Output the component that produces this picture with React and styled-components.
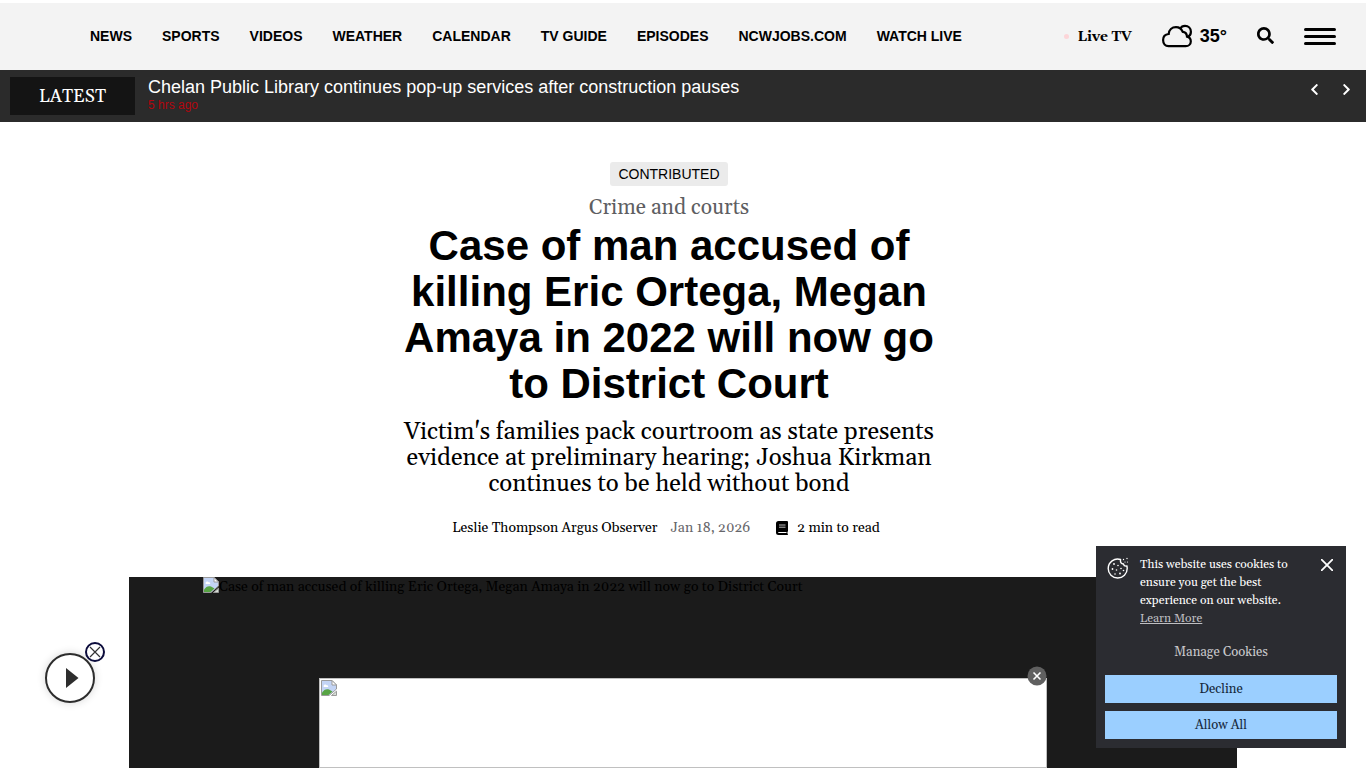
import React from "react";
import styled, { createGlobalStyle, ThemeProvider } from "styled-components";
import { FaSearch, FaChevronLeft, FaChevronRight } from "react-icons/fa";

const theme = {
  sans: '"Liberation Sans", Arial, sans-serif',
  serif: 'Georgia, Gelasio, "Liberation Serif", serif',
  dark: "#1b1b1b",
  ticker: "#2b2b2b",
  panel: "#2b2c31",
  blue: "#9bcfff",
};

const GlobalStyle = createGlobalStyle`
  *, *::before, *::after {
    box-sizing: border-box;
  }
  body {
    margin: 0;
    background: #fff;
    color: #000;
    font-family: ${theme.serif};
    font-size: 14px;
  }
  a {
    color: inherit;
    text-decoration: none;
  }
  button {
    padding: 0;
    border: 0;
    background: none;
    color: inherit;
    font: inherit;
    cursor: pointer;
  }
  h1, h2, p {
    margin: 0;
  }
  svg {
    display: block;
  }
`;

const Page = styled.div`
  display: flex;
  flex-direction: column;
  height: 100vh;
  overflow: hidden;
`;

const TopBar = styled.header`
  display: flex;
  flex: none;
  align-items: center;
  justify-content: space-between;
  height: 70px;
  padding: 0 30px 0 90px;
  border-top: 3px solid #fff;
  background: #f3f3f3;
`;

const Nav = styled.nav`
  display: flex;
  gap: 30px;
  padding-bottom: 2px;
  font: bold 14px/20px ${({ theme }) => theme.sans};
  white-space: nowrap;
`;

const Tools = styled.div`
  display: flex;
  align-items: center;
  gap: 30px;
`;

const LiveLink = styled.a`
  display: flex;
  align-items: center;
  gap: 8px;
  font-weight: bold;
  line-height: 20px;
  white-space: nowrap;

  &::before {
    content: "";
    width: 5px;
    height: 5px;
    border-radius: 50%;
    background: #fcd5d8;
  }
`;

const Weather = styled.a`
  display: flex;
  align-items: center;
  gap: 8px;
  padding-bottom: 2px;
  font: bold 18px/20px ${({ theme }) => theme.sans};
`;

const SearchButton = styled.button`
  padding-bottom: 3px;
`;

const MenuButton = styled.button`
  display: grid;
  gap: 4px;
  width: 32px;

  span {
    height: 3px;
    border-radius: 2px;
    background: #000;
  }
`;

const Ticker = styled.section`
  display: flex;
  flex: none;
  gap: 13px;
  height: 52px;
  padding: 7px 13px 7px 10px;
  background: ${({ theme }) => theme.ticker};
  color: #fff;
`;

const TickerLabel = styled.h2`
  width: 125px;
  height: 38px;
  background: #141414;
  font-size: 18px;
  font-weight: normal;
  line-height: 40px;
  text-align: center;
`;

const TickerStory = styled.div`
  flex: 1;
  font-family: ${({ theme }) => theme.sans};

  a {
    display: block;
    font-size: 18px;
    line-height: 20px;
  }
  time {
    display: block;
    color: #b3060e;
    font-size: 12px;
    line-height: 16px;
  }
`;

const TickerArrows = styled.div`
  display: flex;
  gap: 19px;
  height: 24px;
  align-items: center;
`;

const Article = styled.article`
  display: flex;
  flex: 1;
  flex-direction: column;
  padding: 40px 129px 0;
`;

const ArticleHeader = styled.header`
  display: flex;
  flex-direction: column;
  align-items: center;
  padding-right: 28px;
  text-align: center;
`;

const Badge = styled.span`
  padding: 0 8px;
  border-radius: 3px;
  background: #ebebeb;
  font: 14px/24px ${({ theme }) => theme.sans};
`;

const Section = styled.a`
  margin-top: 8px;
  color: #5e5e62;
  font-size: 21px;
  line-height: 29px;
`;

const Title = styled.h1`
  max-width: 554px;
  font: bold 42px/46px ${({ theme }) => theme.sans};
`;

const Subtitle = styled.p`
  max-width: 554px;
  margin-top: 12px;
  font-size: 24px;
  line-height: 26px;
`;

const Meta = styled.div`
  display: flex;
  align-items: center;
  margin-top: 21px;
  line-height: 20px;

  time {
    margin-left: 13px;
    color: #66666a;
  }
`;

const ReadTime = styled.span`
  display: flex;
  align-items: center;
  gap: 9px;
  margin: 0 6px 0 26px;
`;

const Hero = styled.figure`
  flex: 1;
  margin: 39px 0 0;
  padding: 0 74px;
  background: ${({ theme }) => theme.dark};
`;

const MissingImage = styled.div`
  display: flex;
  line-height: 21px;
`;

const AdBanner = styled.aside`
  position: fixed;
  bottom: 0;
  left: 50%;
  width: 728px;
  height: 90px;
  padding: 1px;
  border: 1px solid #c0c0c0;
  background: #fff;
  transform: translateX(-50%);
`;

const AdClose = styled.button`
  position: absolute;
  top: -13px;
  right: -1px;
`;

const Player = styled.aside`
  position: fixed;
  bottom: 65px;
  left: 45px;
`;

const PlayButton = styled.button`
  display: grid;
  place-items: center;
  width: 50px;
  height: 50px;
  border: 2px solid #2d2d2d;
  border-radius: 50%;
  background: #fff;
  box-shadow: 0 0 8px rgba(0, 0, 0, 0.16);
`;

const PlayerClose = styled.button`
  position: absolute;
  top: -11px;
  right: -10px;
`;

const CookiePanel = styled.aside`
  position: fixed;
  right: 20px;
  bottom: 20px;
  display: grid;
  gap: 8px;
  width: 250px;
  padding: 9px;
  background: ${({ theme }) => theme.panel};
  color: #fff;
`;

const CookieMessage = styled.div`
  display: flex;
  justify-content: space-between;
  gap: 10px;
  padding: 1px 2px 0;
  font-size: 12px;
  line-height: 18px;

  p {
    flex: 1;
  }
  a {
    display: block;
    color: #bfbfc2;
    text-decoration: underline;
  }
`;

const CloseCookies = styled.button`
  align-self: flex-start;
  padding: 3px 2px;
`;

const ManageButton = styled.button`
  height: 31px;
  color: #c8c8cb;
  font-size: 13px;
`;

const ChoiceButton = styled.button`
  height: 28px;
  background: ${({ theme }) => theme.blue};
  color: #16293c;
  font-size: 13px;
`;

const CloudIcon = () => (
  <svg width="30" height="24" viewBox="0 0 30 24" fill="none" stroke="#000" strokeWidth="2.2">
    <path d="M6.5 22.2h17.2c3 0 5.1-2.1 5.1-4.8 0-2.5-1.7-4.3-3.8-4.8-.2-2.8-1.8-4.7-4.3-4.8-1.3-3-3.8-4.6-6.7-4.6-4.1 0-7 2.9-7.3 6.8-3.4.3-5.6 2.7-5.6 6 0 3.6 2.3 6.2 5.4 6.2Z" />
    <path d="M18.2 4.8c1-1.9 2.7-2.9 4.8-2.9 3.4 0 5.9 2.5 5.9 5.9 0 2.4-1.1 4.2-3 5.1" />
  </svg>
);

const BookIcon = () => (
  <svg width="12" height="14" viewBox="0 0 12 14">
    <path fill="#000" d="M2.5 0H11a1 1 0 0 1 1 1v9a1 1 0 0 1-.6.9v1.6c.4.1.6.4.6.7s-.3.8-.7.8H2.5A2.5 2.5 0 0 1 0 11.500V2.500A2.500 2.500 0 0 1 2.500 0Z" />
    <path fill="none" stroke="#bbb" d="M3 4h6.500M3 6.200h6.500" />
    <path fill="none" stroke="#fff" d="M2.300 11.500H10.500" />
  </svg>
);

const BrokenImageIcon = () => (
  <svg width="16" height="16" viewBox="0 0 16 16">
    <path d="M.5.500h10.500l4.500 4.500v4L8 15.500H.5Z" fill="#c3d4f5" stroke="#9a9a9a" />
    <path d="M11 .5V5h4.500Z" fill="#fff" stroke="#9a9a9a" />
    <path d="M2.500 6.500C2.500 4.500 5 4 5.600 5.300 7 4.800 8 6.500 6.800 7H3Z" fill="#fff" />
    <path d="M1 15v-2.500C3 9.500 5.500 8.500 8 9.500l3.500 2L7.500 15Z" fill="#57a444" />
    <path d="M10.500 15.500h5v-4.300Z" fill="#d7dfd7" stroke="#9a9a9a" />
  </svg>
);

const CookieIcon = () => (
  <svg width="23" height="24" viewBox="0 0 23 24" fill="none" stroke="#fff" strokeWidth="1.4">
    <path d="M13.500 3.500C7.500 1.500 1.200 6 1.200 12.500c0 5.300 4.200 9.500 9.500 9.500s9.500-4.200 9.500-9.500c0-1-.1-1.700-.3-2.500-1.800.4-3.100-.4-3.500-2-2 .1-3.300-1.600-2.900-4.500Z" />
    <g fill="#fff" stroke="none">
      <circle cx="7" cy="8" r=".9" />
      <circle cx="11" cy="9.500" r=".8" />
      <circle cx="5.500" cy="13" r=".9" />
      <circle cx="9.500" cy="14" r=".8" />
      <circle cx="14" cy="12.500" r=".8" />
      <circle cx="16.500" cy="14.500" r=".8" />
      <circle cx="8" cy="18" r=".8" />
      <circle cx="13" cy="17.500" r=".9" />
      <circle cx="16.500" cy="3.500" r=".7" />
      <circle cx="20" cy="2.500" r=".7" />
      <circle cx="18" cy="6" r=".6" />
      <circle cx="20.500" cy="6" r=".6" />
    </g>
  </svg>
);

const navItems = [
  "NEWS",
  "SPORTS",
  "VIDEOS",
  "WEATHER",
  "CALENDAR",
  "TV GUIDE",
  "EPISODES",
  "NCWJOBS.COM",
  "WATCH LIVE",
];

const headline =
  "Case of man accused of killing Eric Ortega, Megan Amaya in 2022 will now go to District Court";

const App = () => {
  return (
    <ThemeProvider theme={theme}>
      <GlobalStyle />
      <Page>
        <TopBar>
          <Nav>
            {navItems.map((item) => (
              <a href="#" key={item}>
                {item}
              </a>
            ))}
          </Nav>
          <Tools>
            <LiveLink href="#">Live TV</LiveLink>
            <Weather href="#">
              <CloudIcon />
              35°
            </Weather>
            <SearchButton aria-label="Search">
              <FaSearch size={17} />
            </SearchButton>
            <MenuButton aria-label="Menu">
              <span />
              <span />
              <span />
            </MenuButton>
          </Tools>
        </TopBar>
        <Ticker>
          <TickerLabel>LATEST</TickerLabel>
          <TickerStory>
            <a href="#">
              Chelan Public Library continues pop-up services after construction
              pauses
            </a>
            <time>5 hrs ago</time>
          </TickerStory>
          <TickerArrows>
            <button aria-label="Previous">
              <FaChevronLeft size={13} />
            </button>
            <button aria-label="Next">
              <FaChevronRight size={13} />
            </button>
          </TickerArrows>
        </Ticker>
        <Article>
          <ArticleHeader>
            <Badge>CONTRIBUTED</Badge>
            <Section href="#">Crime and courts</Section>
            <Title>{headline}</Title>
            <Subtitle>
              Victim's families pack courtroom as state presents evidence at
              preliminary hearing; Joshua Kirkman continues to be held without
              bond
            </Subtitle>
            <Meta>
              <span>Leslie Thompson Argus Observer</span>
              <time>Jan 18, 2026</time>
              <ReadTime>
                <BookIcon />2 min to read
              </ReadTime>
            </Meta>
          </ArticleHeader>
          <Hero>
            <MissingImage>
              <BrokenImageIcon />
              {headline}
            </MissingImage>
          </Hero>
        </Article>
      </Page>
      <AdBanner>
        <BrokenImageIcon />
        <AdClose aria-label="Close ad">
          <svg width="20" height="20" viewBox="0 0 20 20">
            <circle cx="10" cy="10" r="9.500" fill="#606060" />
            <path d="m6.500 6.500 7 7m0-7-7 7" stroke="#fff" strokeWidth="1.600" />
          </svg>
        </AdClose>
      </AdBanner>
      <Player>
        <PlayButton aria-label="Play">
          <svg width="18" height="20" viewBox="0 0 18 20">
            <path d="M5 0v20l12.500-10Z" fill="#2d2d2d" />
          </svg>
        </PlayButton>
        <PlayerClose aria-label="Close player">
          <svg width="20" height="20" viewBox="0 0 20 20" fill="none">
            <circle cx="10" cy="10" r="9" fill="#fff" stroke="#0b0b3b" strokeWidth="2" />
            <path d="m5 5 10 10m0-10L5 15" stroke="#333" strokeWidth="1.200" />
          </svg>
        </PlayerClose>
      </Player>
      <CookiePanel>
        <CookieMessage>
          <CookieIcon />
          <p>
            This website uses cookies to ensure you get the best experience on
            our website.
            <a href="#">Learn More</a>
          </p>
          <CloseCookies aria-label="Close">
            <svg width="12" height="12" viewBox="0 0 12 12" stroke="#fff" strokeWidth="1.800">
              <path d="m0 0 12 12m0-12L0 12" />
            </svg>
          </CloseCookies>
        </CookieMessage>
        <ManageButton>Manage Cookies</ManageButton>
        <ChoiceButton>Decline</ChoiceButton>
        <ChoiceButton>Allow All</ChoiceButton>
      </CookiePanel>
    </ThemeProvider>
  );
};

export default App;
